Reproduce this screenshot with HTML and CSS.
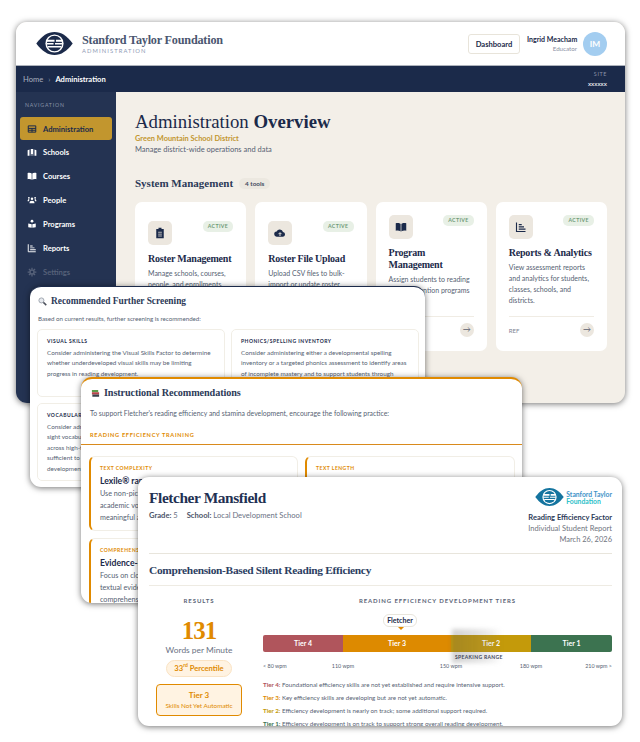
FILE: index.html
```html
<!DOCTYPE html>
<html lang="en">
<head>
  <meta charset="UTF-8">
  <title>Stanford Taylor Foundation - Overview</title>
  <link rel="stylesheet" href="styles.css">
</head>
<body>
  <svg class="defs" width="0" height="0">
    <symbol id="eye" viewBox="0 0 38 24">
      <path d="M0 12C6 4 12 0 19 0s13 4 19 12c-6 8-12 12-19 12S6 20 0 12z" fill="currentColor"/>
      <circle cx="19" cy="12" r="9.500" fill="#fff"/>
      <circle cx="19" cy="12" r="8" fill="currentColor"/>
      <path d="M11 8h8v2.200h-8zM20.500 8H27v2.200h-6.500zM10.500 11.500H18v1.600h-7.500zM19.500 11.500h8v1.600h-8zM12 14.500h14v1.600H12z" fill="#fff"/>
    </symbol>
  </svg>

  <section class="window admin">
    <header class="admin-top">
      <div class="brand">
        <svg class="brand-logo"><use href="#eye"/></svg>
        <div>
          <div class="brand-name">Stanford Taylor Foundation</div>
          <div class="brand-sub">ADMINISTRATION</div>
        </div>
      </div>
      <div class="account">
        <button class="dash-btn">Dashboard</button>
        <div class="who">
          <div class="who-name">Ingrid Meacham</div>
          <div class="who-role">Educator</div>
        </div>
        <div class="avatar">IM</div>
      </div>
    </header>
    <div class="crumbs">
      <div><span class="crumb-home">Home</span><span class="crumb-sep">›</span><strong>Administration</strong></div>
      <div class="site"><span>SITE</span>xxxxxx</div>
    </div>
    <div class="admin-body">
      <nav class="side">
        <div class="side-label">NAVIGATION</div>
        <a class="side-item active">
          <svg viewBox="0 0 16 16"><path d="M2 3h12v10H2zM2 7h12M2 10h12M8 7v6" fill="none" stroke="currentColor" stroke-width="1.600"/></svg>Administration</a>
        <a class="side-item">
          <svg viewBox="0 0 16 16"><path d="M1 5l3-1v10H1zM15 5l-3-1v10h3zM6 3h4v11H9v-3H7v3H6z" fill="currentColor"/></svg>Schools</a>
        <a class="side-item">
          <svg viewBox="0 0 16 16"><path d="M1 3c2.500-.5 5-.5 6.500 1v10C6 12.800 3.500 12.500 1 13zM15 3c-2.500-.5-5-.5-6.500 1v10c1.500-1.200 4-1.500 6.500-1z" fill="currentColor"/></svg>Courses</a>
        <a class="side-item">
          <svg viewBox="0 0 16 16"><circle cx="8" cy="6" r="2" fill="currentColor"/><circle cx="3" cy="4.500" r="1.500" fill="currentColor"/><circle cx="13" cy="4.500" r="1.500" fill="currentColor"/><path d="M4 13c0-3 1.500-4 4-4s4 1 4 4zM1 10c0-2 .8-3.500 2-3.500l1 1-1 2.500zM15 10c0-2-.8-3.500-2-3.500l-1 1 1 2.500z" fill="currentColor"/></svg>People</a>
        <a class="side-item">
          <svg viewBox="0 0 16 16"><circle cx="8" cy="3.500" r="2.200" fill="currentColor"/><path d="M2 7l5.500 1.500V14L2 13zM14 7L8.500 8.500V14l5.500-1z" fill="currentColor"/></svg>Programs</a>
        <a class="side-item">
          <svg viewBox="0 0 16 16"><path d="M2 2v12h12" fill="none" stroke="currentColor" stroke-width="1.500"/><path d="M5 4h4v1.500H5zM5 7h7v1.500H5zM5 10h9v1.500H5z" fill="currentColor"/></svg>Reports</a>
        <a class="side-item off">
          <svg viewBox="0 0 16 16"><circle cx="8" cy="8" r="3.300" fill="none" stroke="currentColor" stroke-width="2.500"/><path d="M8 1v3M8 12v3M1 8h3M12 8h3M3 3l2 2M11 11l2 2M13 3l-2 2M5 11l-2 2" stroke="currentColor" stroke-width="2"/></svg>Settings</a>
      </nav>
      <main class="admin-main">
        <h1 class="page-title">Administration <b>Overview</b></h1>
        <div class="district">Green Mountain School District</div>
        <p class="page-desc">Manage district-wide operations and data</p>
        <div class="group-head">
          <h2>System Management</h2><span class="count">4 tools</span>
        </div>
        <div class="cards">
          <article class="card low">
            <div class="card-top">
              <div class="card-icon"><svg viewBox="0 0 16 16"><path d="M3 2.500h3V1h4v1.500h3V15H3z" fill="currentColor"/><path d="M5.500 7h5M5.500 9.500h5M5.500 12h5" stroke="#ece7df" stroke-width="1"/></svg></div>
              <span class="active-tag">ACTIVE</span>
            </div>
            <h3>Roster Management</h3>
            <p>Manage schools, courses, people, and enrollments</p>
          </article>
          <article class="card low">
            <div class="card-top">
              <div class="card-icon"><svg viewBox="0 0 16 16"><path d="M4 13a3.500 3.500 0 0 1-.5-7A4.500 4.500 0 0 1 12 6.500 3.300 3.300 0 0 1 12 13z" fill="currentColor"/><path d="M8 12V8M6 9.500L8 7.500l2 2" fill="none" stroke="#ece7df" stroke-width="1.300"/></svg></div>
              <span class="active-tag">ACTIVE</span>
            </div>
            <h3>Roster File Upload</h3>
            <p>Upload CSV files to bulk-import or update roster</p>
          </article>
          <article class="card">
            <div class="card-top">
              <div class="card-icon"><svg viewBox="0 0 16 16"><path d="M1 3c2.500-.5 5-.5 6.500 1v10C6 12.800 3.500 12.500 1 13zM15 3c-2.500-.5-5-.5-6.500 1v10c1.500-1.200 4-1.500 6.500-1z" fill="currentColor"/></svg></div>
              <span class="active-tag">ACTIVE</span>
            </div>
            <h3>Program<br>Management</h3>
            <p>Assign students to reading and intervention programs</p>
            <div class="card-foot"><span>REF</span><i class="go">→</i></div>
          </article>
          <article class="card">
            <div class="card-top">
              <div class="card-icon"><svg viewBox="0 0 16 16"><path d="M2 2v12h12" fill="none" stroke="currentColor" stroke-width="1.500"/><path d="M5 4h4v1.500H5zM5 7h7v1.500H5zM5 10h9v1.500H5z" fill="currentColor"/></svg></div>
              <span class="active-tag">ACTIVE</span>
            </div>
            <h3>Reports &amp; Analytics</h3>
            <p>View assessment reports and analytics for students, classes, schools, and districts.</p>
            <div class="card-foot"><span>REF</span><i class="go">→</i></div>
          </article>
        </div>
      </main>
    </div>
  </section>

  <section class="window screening">
    <h2 class="win-title">
      <svg class="win-icon" viewBox="0 0 10 10"><circle cx="3.800" cy="3.800" r="2.800" fill="#e6e9ee" stroke="#9aa0aa" stroke-width="1"/><path d="M6 6l3.200 3" stroke="#4a4f5a" stroke-width="1.600"/></svg>
      Recommended Further Screening</h2>
    <p class="win-desc">Based on current results, further screening is recommended:</p>
    <div class="screen-grid">
      <div class="screen-card">
        <h4>VISUAL SKILLS</h4>
        <p>Consider administering the Visual Skills Factor to determine whether underdeveloped visual skills may be limiting progress in reading development.</p>
      </div>
      <div class="screen-card">
        <h4>PHONICS/SPELLING INVENTORY</h4>
        <p>Consider administering either a developmental spelling inventory or a targeted phonics assessment to identify areas of incomplete mastery and to support students through</p>
      </div>
      <div class="screen-card tall">
        <h4>VOCABULARY</h4>
        <p>Consider administering a<br>sight vocabulary check<br>across high-frequency words<br>sufficient to confirm<br>development</p>
      </div>
    </div>
  </section>

  <section class="window instruct">
    <h2 class="win-title">
      <svg class="win-icon" viewBox="0 0 10 10"><path d="M1 1h7v2.500H1z" fill="#5c9a4a"/><path d="M1 3.500h8V6H1z" fill="#b8444a"/><path d="M1.500 6H9v2.500H1.500z" fill="#3b3f4a"/></svg>
      Instructional Recommendations</h2>
    <p class="win-desc">To support Fletcher's reading efficiency and stamina development, encourage the following practice:</p>
    <div class="train-label">READING EFFICIENCY TRAINING</div>
    <div class="train-grid">
      <div class="train-card">
        <h5>TEXT COMPLEXITY</h5>
        <h4>Lexile® range practice</h4>
        <p>Use non-picture texts with<br>academic vocabulary and<br>meaningful arguments</p>
      </div>
      <div class="train-card">
        <h5>TEXT LENGTH</h5>
        <h4>Longer passages</h4>
      </div>
      <div class="train-card">
        <h5>COMPREHENSION</h5>
        <h4>Evidence-based reading</h4>
        <p>Focus on close reading with<br>textual evidence to build<br>comprehension</p>
      </div>
    </div>
  </section>

  <section class="window report">
    <div class="report-head">
      <div>
        <h1 class="student">Fletcher Mansfield</h1>
        <div class="student-meta"><b>Grade:</b> 5 <b class="school">School:</b> Local Development School</div>
      </div>
      <div class="report-info">
        <div class="report-logo">
          <svg class="report-eye"><use href="#eye"/></svg>
          <div class="report-logo-text">Stanford Taylor<span>Foundation</span></div>
        </div>
        <strong>Reading Efficiency Factor</strong>
        <div>Individual Student Report</div>
        <div>March 26, 2026</div>
      </div>
    </div>
    <h2 class="report-title">Comprehension-Based Silent Reading Efficiency</h2>
    <div class="report-cols">
      <div class="results">
        <div class="col-label">RESULTS</div>
        <div class="wpm">131</div>
        <div class="wpm-label">Words per Minute</div>
        <div class="pct">33<sup>rd</sup> Percentile</div>
        <div class="tier-box"><b>Tier 3</b><span>Skills Not Yet Automatic</span></div>
      </div>
      <div class="tiers">
        <div class="col-label">READING EFFICIENCY DEVELOPMENT TIERS</div>
        <div class="marker-row"><div class="marker">Fletcher</div></div>
        <div class="tier-bar">
          <div class="seg t4">Tier 4</div>
          <div class="seg t3">Tier 3</div>
          <div class="seg t2">Tier 2</div>
          <div class="seg t1">Tier 1</div>
          <div class="speaking"></div>
          <div class="speaking-label">SPEAKING RANGE</div>
        </div>
        <div class="scale"><span class="s80">&lt; 80 wpm</span><span class="s110">110 wpm</span><span class="s150">150 wpm</span><span class="s180">180 wpm</span><span class="s210">210 wpm &gt;</span></div>
        <ul class="legend">
          <li><b class="c4">Tier 4:</b> Foundational efficiency skills are not yet established and require intensive support.</li>
          <li><b class="c3">Tier 3:</b> Key efficiency skills are developing but are not yet automatic.</li>
          <li><b class="c2">Tier 2:</b> Efficiency development is nearly on track; some additional support required.</li>
          <li><b class="c1">Tier 1:</b> Efficiency development is on track to support strong overall reading development.</li>
        </ul>
      </div>
    </div>
  </section>
</body>
</html>
```
FILE: styles.css
```css
* {
  box-sizing: border-box;
}
body {
  margin: 0;
  width: 640px;
  height: 742px;
  position: relative;
  overflow: hidden;
  background: #fff;
  font-family: Lato, sans-serif;
  color: #1b2a4a;
}
h1, h2, h3, h4, h5, p, ul {
  margin: 0;
  padding: 0;
}
.defs {
  position: absolute;
}

/* the four overlapping windows */
.window {
  position: absolute;
  overflow: hidden;
  background: #fff;
  border-radius: 11px;
  box-shadow: 0 1px 6px rgba(0, 0, 0, .55);
}
.admin {
  left: 16px;
  top: 22px;
  width: 609px;
  height: 381px;
  display: flex;
  flex-direction: column;
  background: #f3efe8;
}
.screening {
  left: 30px;
  top: 286px;
  width: 395px;
  height: 201px;
  border-top: 1px solid #1b2a4a;
}
.instruct {
  left: 81px;
  top: 377px;
  width: 441px;
  height: 226px;
  border-top: 2px solid #e08a00;
}
.report {
  left: 138px;
  top: 477px;
  width: 484px;
  height: 249px;
}

/* admin header */
.admin-top {
  height: 43px;
  flex: none;
  background: #fff;
  display: flex;
  align-items: center;
  justify-content: space-between;
  padding: 0 18px 0 20px;
}
.brand {
  display: flex;
  align-items: center;
  gap: 9px;
}
.brand-logo {
  width: 37px;
  height: 23px;
  color: #1b2a4a;
}
.brand-name {
  font: bold 12.2px/14px "Liberation Serif", serif;
  letter-spacing: -.2px;
  color: #4a5670;
}
.brand-sub {
  font-size: 5.8px;
  line-height: 8px;
  letter-spacing: 1.1px;
  color: #8f9ab5;
}
.account {
  display: flex;
  align-items: center;
}
.dash-btn {
  width: 52px;
  height: 20px;
  padding: 0;
  margin-right: 7px;
  background: #fff;
  border: 1px solid #e8e4da;
  border-radius: 3px;
  font: 700 7.6px Lato, sans-serif;
  color: #1b2a4a;
}
.who {
  width: 50px;
  text-align: right;
  margin-right: 6px;
}
.who-name {
  font-size: 7px;
  font-weight: 700;
  line-height: 9px;
  white-space: nowrap;
}
.who-role {
  font-size: 6.2px;
  line-height: 9px;
  color: #8a91a3;
}
.avatar {
  width: 24px;
  height: 24px;
  border-radius: 50%;
  background: #a3cdf0;
  color: #fff;
  font-size: 8.4px;
  font-weight: 700;
  line-height: 24px;
  text-align: center;
}
.crumbs {
  height: 27px;
  flex: none;
  background: #1b2a4a;
  color: #fff;
  display: flex;
  align-items: center;
  justify-content: space-between;
  padding: 0 18px 0 7px;
  font-size: 7.6px;
  border-top: 1px solid #aeb3bc;
}
.crumb-home {
  color: #a8afbe;
}
.crumb-sep {
  margin: 0 5px;
  color: #8a93a8;
}
.crumbs strong {
  font-weight: 700;
}
.site {
  text-align: right;
  font-size: 6.4px;
  line-height: 9px;
}
.site span {
  display: block;
  color: #8a93a8;
  letter-spacing: .6px;
  font-size: 5.4px;
}

/* sidebar */
.admin-body {
  flex: 1;
  display: flex;
  min-height: 0;
}
.side {
  width: 100px;
  flex: none;
  background: #243352;
  padding: 9px 4px 0;
}
.side-label {
  font-size: 5.2px;
  line-height: 8px;
  letter-spacing: .8px;
  color: #8a93a8;
  padding-left: 5px;
  margin-bottom: 8px;
}
.side-item {
  height: 24px;
  display: flex;
  align-items: center;
  gap: 6px;
  padding-left: 7px;
  font-size: 7.6px;
  font-weight: 700;
  color: #fff;
}
.side-item svg {
  width: 10px;
  height: 10px;
  flex: none;
}
.side-item.active {
  height: 23px;
  border-radius: 3px;
  background: #c2962e;
  color: #1b2a4a;
}
.side-item.off {
  color: #566179;
}

/* admin content */
.admin-main {
  flex: 1;
  padding: 18px 18px 0 19px;
}
.page-title {
  font: 400 18.8px/24px "Liberation Serif", serif;
}
.district {
  font-size: 7.4px;
  font-weight: 700;
  line-height: 10px;
  color: #c2962e;
}
.page-desc {
  font-size: 7.5px;
  line-height: 12px;
  color: #565f73;
}
.group-head {
  display: flex;
  align-items: center;
  gap: 6px;
  margin-top: 20px;
  height: 14px;
}
.group-head h2 {
  font: bold 11px "Liberation Serif", serif;
  color: #2c3a58;
}
.count {
  background: #ece8e0;
  border-radius: 6px;
  padding: 0 6px;
  font-size: 6.4px;
  font-weight: 700;
  line-height: 11px;
  color: #444c5f;
}
.cards {
  display: flex;
  gap: 9px;
  margin-top: 12px;
}
.card {
  width: 111.25px;
  height: 149px;
  flex: none;
  background: #fff;
  border-radius: 7px;
  padding: 13px 13px 0 13px;
  display: flex;
  flex-direction: column;
}
.card.low {
  padding-top: 19px;
}
.card-top {
  display: flex;
  justify-content: space-between;
  align-items: flex-start;
}
.card-icon {
  width: 24px;
  height: 24px;
  border-radius: 5px;
  background: #ece7df;
  display: flex;
  align-items: center;
  justify-content: center;
  color: #1b2a4a;
}
.card-icon svg {
  width: 12px;
  height: 12px;
}
.active-tag {
  background: #e8f0e6;
  border-radius: 5px;
  padding: 0 5px;
  font-size: 5.2px;
  font-weight: 700;
  line-height: 11px;
  letter-spacing: .4px;
  color: #6f9a78;
}
.card h3 {
  font: bold 10px/12px "Liberation Serif", serif;
  letter-spacing: -.2px;
  margin-top: 8px;
  white-space: nowrap;
}
.card p {
  font-size: 7px;
  line-height: 11px;
  margin-top: 3px;
  color: #565f73;
  height: 44px;
}
.card-foot {
  margin-top: auto;
  margin-bottom: 14px;
  border-top: 1px solid #f0ece4;
  padding-top: 6px;
  display: flex;
  align-items: center;
  justify-content: space-between;
  font-size: 6px;
  color: #7c8393;
}
.go {
  width: 14px;
  height: 14px;
  border-radius: 50%;
  background: #ece7df;
  font-style: normal;
  font-size: 8px;
  line-height: 13px;
  text-align: center;
  color: #5a6070;
}

/* window headings shared by the two recommendation windows */
.win-title {
  font: bold 9.4px/14px "Liberation Serif", serif;
  color: #2c3a58;
  display: flex;
  align-items: center;
}
.win-icon {
  width: 9px;
  height: 9px;
  margin-right: 4px;
  flex: none;
}
.win-desc {
  font-size: 6.2px;
  line-height: 10px;
  color: #565f73;
}

/* further screening */
.screening {
  padding: 7px 7px 0 8px;
}
.screening .win-title {
  margin-bottom: 6px;
}
.screening .win-desc {
  margin-bottom: 5px;
}
.screen-grid {
  display: grid;
  grid-template-columns: 188px 188px;
  gap: 6px;
  margin-left: -1px;
}
.screen-card {
  height: 68px;
  border: 1px solid #f1eee6;
  border-radius: 5px;
  padding: 7px 9px 0;
}
.screen-card.tall {
  height: 78px;
}
.screen-card h4 {
  font-size: 5px;
  line-height: 8px;
  letter-spacing: .5px;
  margin-bottom: 3px;
}
.screen-card p {
  font-size: 6.3px;
  line-height: 10.4px;
  color: #565f73;
}

/* instructional recommendations */
.instruct {
  padding-top: 7px;
}
.instruct .win-title {
  font-size: 10.2px;
  letter-spacing: -.1px;
  padding-left: 10px;
}
.instruct .win-desc {
  font-size: 6.85px;
  line-height: 11px;
  padding: 8px 9px 0;
}
.train-label {
  font-size: 5.6px;
  font-weight: 700;
  letter-spacing: .7px;
  line-height: 8px;
  color: #e08a00;
  padding: 12px 9px 5px;
  border-bottom: 1px solid #d98a1c;
}
.train-grid {
  display: grid;
  grid-template-columns: 209px 210px;
  gap: 7px;
  padding: 11px 0 0 8px;
}
.train-card {
  height: 75px;
  border: 1px solid #f1eee6;
  border-left: 2px solid #e08a00;
  border-radius: 6px;
  padding: 7px 9px 0;
}
.train-card h5 {
  font-size: 5px;
  font-weight: 700;
  line-height: 8px;
  letter-spacing: .5px;
  color: #e08a00;
}
.train-card h4 {
  font-size: 8.6px;
  line-height: 12px;
  font-weight: 700;
  margin-top: 3px;
}
.train-card p {
  font-size: 7.2px;
  line-height: 12px;
  margin-top: 1px;
  color: #565f73;
}

/* student report */
.report {
  padding: 0 10px 0 11px;
}
.report-head {
  height: 77px;
  display: flex;
  justify-content: space-between;
  padding-top: 11px;
  border-bottom: 1px solid #e8e5dc;
}
.student {
  font: bold 15.4px/20px "Liberation Serif", serif;
  letter-spacing: -.4px;
  color: #1f3153;
}
.student-meta {
  font-size: 7.6px;
  line-height: 10px;
  margin-top: 2px;
  color: #6a7284;
}
.student-meta b {
  font-weight: 700;
  color: #4a5368;
}
.school {
  margin-left: 7px;
}
.report-info {
  text-align: right;
  font-size: 7.5px;
  line-height: 11.2px;
  color: #6f7480;
}
.report-info strong {
  display: block;
  font-weight: 700;
  color: #2c3a58;
}
.report-logo {
  display: flex;
  justify-content: flex-end;
  gap: 2px;
  height: 22px;
  margin-bottom: 2px;
}
.report-eye {
  width: 29px;
  height: 18px;
  color: #14749f;
}
.report-logo-text {
  font-size: 6.8px;
  line-height: 6.6px;
  font-weight: 700;
  text-align: left;
  padding-top: 3px;
  color: #3f93c8;
}
.report-logo-text span {
  display: block;
  color: #2cc0c8;
}
.report-title {
  height: 32px;
  font: bold 11.4px/32px "Liberation Serif", serif;
  letter-spacing: -.3px;
  color: #2c3e62;
  border-bottom: 1px solid #eeebe3;
}
.report-cols {
  display: flex;
  gap: 14px;
}
.results {
  width: 100px;
  flex: none;
  text-align: center;
  padding-top: 11px;
}
.col-label {
  font-size: 6px;
  font-weight: 700;
  line-height: 8px;
  letter-spacing: .9px;
  text-align: center;
  color: #5c6578;
}
.wpm {
  font: bold 25px/28px "Liberation Serif", serif;
  letter-spacing: -1px;
  color: #e08a00;
  margin-top: 12px;
}
.wpm-label {
  font-size: 8.4px;
  line-height: 10px;
  color: #6a7284;
}
.pct {
  width: 66px;
  height: 17px;
  margin: 5px auto 0;
  border: 1px solid #fae3c3;
  border-radius: 9px;
  background: #fff3e2;
  font-size: 7.6px;
  font-weight: 700;
  line-height: 15px;
  color: #e08a00;
}
.pct sup {
  font-size: 5px;
  line-height: 0;
}
.tier-box {
  width: 86px;
  height: 32px;
  margin: 7px auto 0;
  border: 1px solid #e08a00;
  border-radius: 4px;
  background: #fff3e2;
  color: #e08a00;
  display: flex;
  flex-direction: column;
  justify-content: center;
  gap: 2px;
}
.tier-box b {
  font-size: 8px;
  font-weight: 700;
  line-height: 9px;
}
.tier-box span {
  font-size: 6.4px;
  line-height: 8px;
}
.tiers {
  flex: 1;
  padding-top: 11px;
}
.marker-row {
  height: 30px;
  padding: 9px 0 0 120px;
}
.marker {
  position: relative;
  width: 34px;
  height: 13px;
  border: 1px solid #e8e5dc;
  border-radius: 6px;
  background: #fff;
  font-size: 7px;
  font-weight: 700;
  line-height: 11px;
  text-align: center;
}
.marker::after {
  content: "";
  position: absolute;
  left: 14px;
  top: 12px;
  border: 3px solid transparent;
  border-top: 3px solid #e08a00;
}
.tier-bar {
  position: relative;
  height: 17px;
  display: flex;
  border-radius: 2px;
}
.seg {
  font-size: 7px;
  font-weight: 700;
  line-height: 17px;
  text-align: center;
  color: #fff;
}
.t4 {
  width: 80px;
  background: #b0555c;
  border-radius: 2px 0 0 2px;
}
.t3 {
  width: 108px;
  background: #dd8a00;
}
.t2 {
  width: 80px;
  background: #c49a0a;
}
.t1 {
  width: 81px;
  background: #3c7350;
  border-radius: 0 2px 2px 0;
}
.speaking {
  position: absolute;
  left: 189px;
  top: -6px;
  width: 50px;
  height: 34px;
  background: linear-gradient(to right, rgba(90, 90, 90, .28), rgba(120, 120, 120, .16) 70%, rgba(120, 120, 120, 0));
  filter: blur(2px);
}
.speaking-label {
  position: absolute;
  left: 192px;
  top: 18px;
  font-size: 5px;
  font-weight: 700;
  line-height: 8px;
  letter-spacing: .35px;
  color: #3e4658;
  white-space: nowrap;
}
.scale {
  display: flex;
  font-size: 5.4px;
  line-height: 8px;
  margin-top: 10px;
  color: #565f73;
}
.scale span {
  width: 40px;
  text-align: center;
}
.scale .s80 {
  width: 60px;
  text-align: left;
}
.s150 {
  margin-left: 68px;
}
.s180 {
  margin-left: 40px;
}
.scale .s210 {
  margin-left: auto;
  text-align: right;
}
.legend {
  list-style: none;
  margin-top: 8px;
  font-size: 6.2px;
  line-height: 13px;
  color: #565f73;
  white-space: nowrap;
}
.legend b {
  font-weight: 700;
}
.c4 {
  color: #b0555c;
}
.c3 {
  color: #dd8a00;
}
.c2 {
  color: #c49a0a;
}
.c1 {
  color: #3c7350;
}
```
